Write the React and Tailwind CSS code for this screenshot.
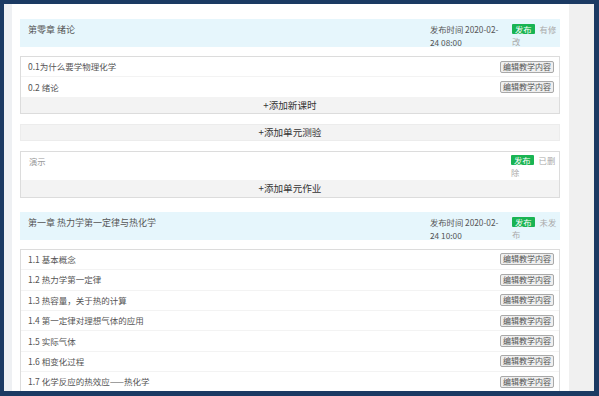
import React from 'react';

const font = { fontFamily: '"Noto Sans CJK SC", "Noto Sans", sans-serif' };

const chapters = [
    {
        title: '第零章 绪论',
        date: '2020-02-',
        date2: '24 08:00',
        status: ['有修', '改'],
        lessons: ['0.1为什么要学物理化学', '0.2 绪论'],
        extras: true,
    },
    {
        title: '第一章 热力学第一定律与热化学',
        date: '2020-02-',
        date2: '24 10:00',
        status: ['未发', '布'],
        lessons: [
            '1.1 基本概念',
            '1.2 热力学第一定律',
            '1.3 热容量，关于热的计算',
            '1.4 第一定律对理想气体的应用',
            '1.5 实际气体',
            '1.6 相变化过程',
            '1.7 化学反应的热效应——热化学',
        ],
        extras: false,
    },
];

const Badge = () => (
    <span className="inline-block bg-[#19b453] text-white text-[8.3px] leading-[10px] px-[3px] mr-[5px] align-middle rounded-[1px]">发布</span>
);

// status text wraps under the badge, as in the page
const Status = ({ text }) => (
    <div className="w-[48px] shrink-0 text-[8.3px] leading-[12px] text-[#aaa]">
        <div className="flex items-center">
            <Badge />
            <span>{text[0]}</span>
        </div>
        <div>{text[1]}</div>
    </div>
);

const EditButton = () => (
    <button className="shrink-0 text-[8px] leading-[8px] text-[#555] bg-[#efefef] border border-[#a8a8a8] rounded-[2px] px-[2px] py-[1px]">
        编辑教学内容
    </button>
);

const AddRow = ({ label, className = '' }) => (
    <div className={`bg-[#f3f3f3] flex items-center justify-center text-[9.6px] text-[#333] ${className}`}>
        +{label}
    </div>
);

const ChapterHeader = ({ chapter }) => (
    <div className="h-[28px] bg-[#e6f6fc] flex items-start pl-[8px] pt-[4px]">
        <div className="flex-1 text-[9px] leading-[13px] text-[#555]">{chapter.title}</div>
        <div className="w-[82px] shrink-0 text-[8.3px] leading-[13px] text-[#555]">
            <div>发布时间 {chapter.date}</div>
            <div>{chapter.date2}</div>
        </div>
        <Status text={chapter.status} />
    </div>
);

const Lessons = ({ lessons, children }) => (
    <div className="border border-[#dcdcdc]">
        {lessons.map((l, i) => (
            <div key={i} className="h-[20.4px] flex items-center justify-between pl-[7px] pr-[5px] border-b border-[#f3f3f3]">
                <span className="text-[8.5px] text-[#555]">{l}</span>
                <EditButton />
            </div>
        ))}
        {children}
    </div>
);

export default function App() {
    return (
        <div className="w-[599px] h-[396px] bg-[#1b3a63] pt-[4px] pl-[4px] pr-[5px] pb-[5px] overflow-hidden" style={font}>
            <div className="flex h-full">
                <div className="w-[8px] bg-[#eef0f3]" />
                <div className="flex-1 bg-white overflow-hidden pl-[8px] pr-[9px] pt-[15px]">
                    {chapters.map((c, ci) => (
                        <div key={ci} className={ci > 0 ? 'mt-[14px]' : ''}>
                            <ChapterHeader chapter={c} />
                            <div className="mt-[9px]">
                                <Lessons lessons={c.lessons}>
                                    {c.extras && <AddRow label="添加新课时" className="h-[15px]" />}
                                </Lessons>
                            </div>
                            {c.extras && (
                                <>
                                    <AddRow label="添加单元测验" className="h-[17px] mt-[10px] border border-[#ececec]" />
                                    <div className="mt-[10px] border border-[#dcdcdc]">
                                        <div className="h-[28px] flex items-start pl-[8px] pt-[2px]">
                                            <div className="flex-1 text-[8.3px] leading-[13px] text-[#999] pt-[1px]">演示</div>
                                            <Status text={['已删', '除']} />
                                        </div>
                                        <AddRow label="添加单元作业" className="h-[17px]" />
                                    </div>
                                </>
                            )}
                        </div>
                    ))}
                </div>
                <div className="w-[25px] bg-[#f0f0f0]" />
            </div>
        </div>
    );
}
